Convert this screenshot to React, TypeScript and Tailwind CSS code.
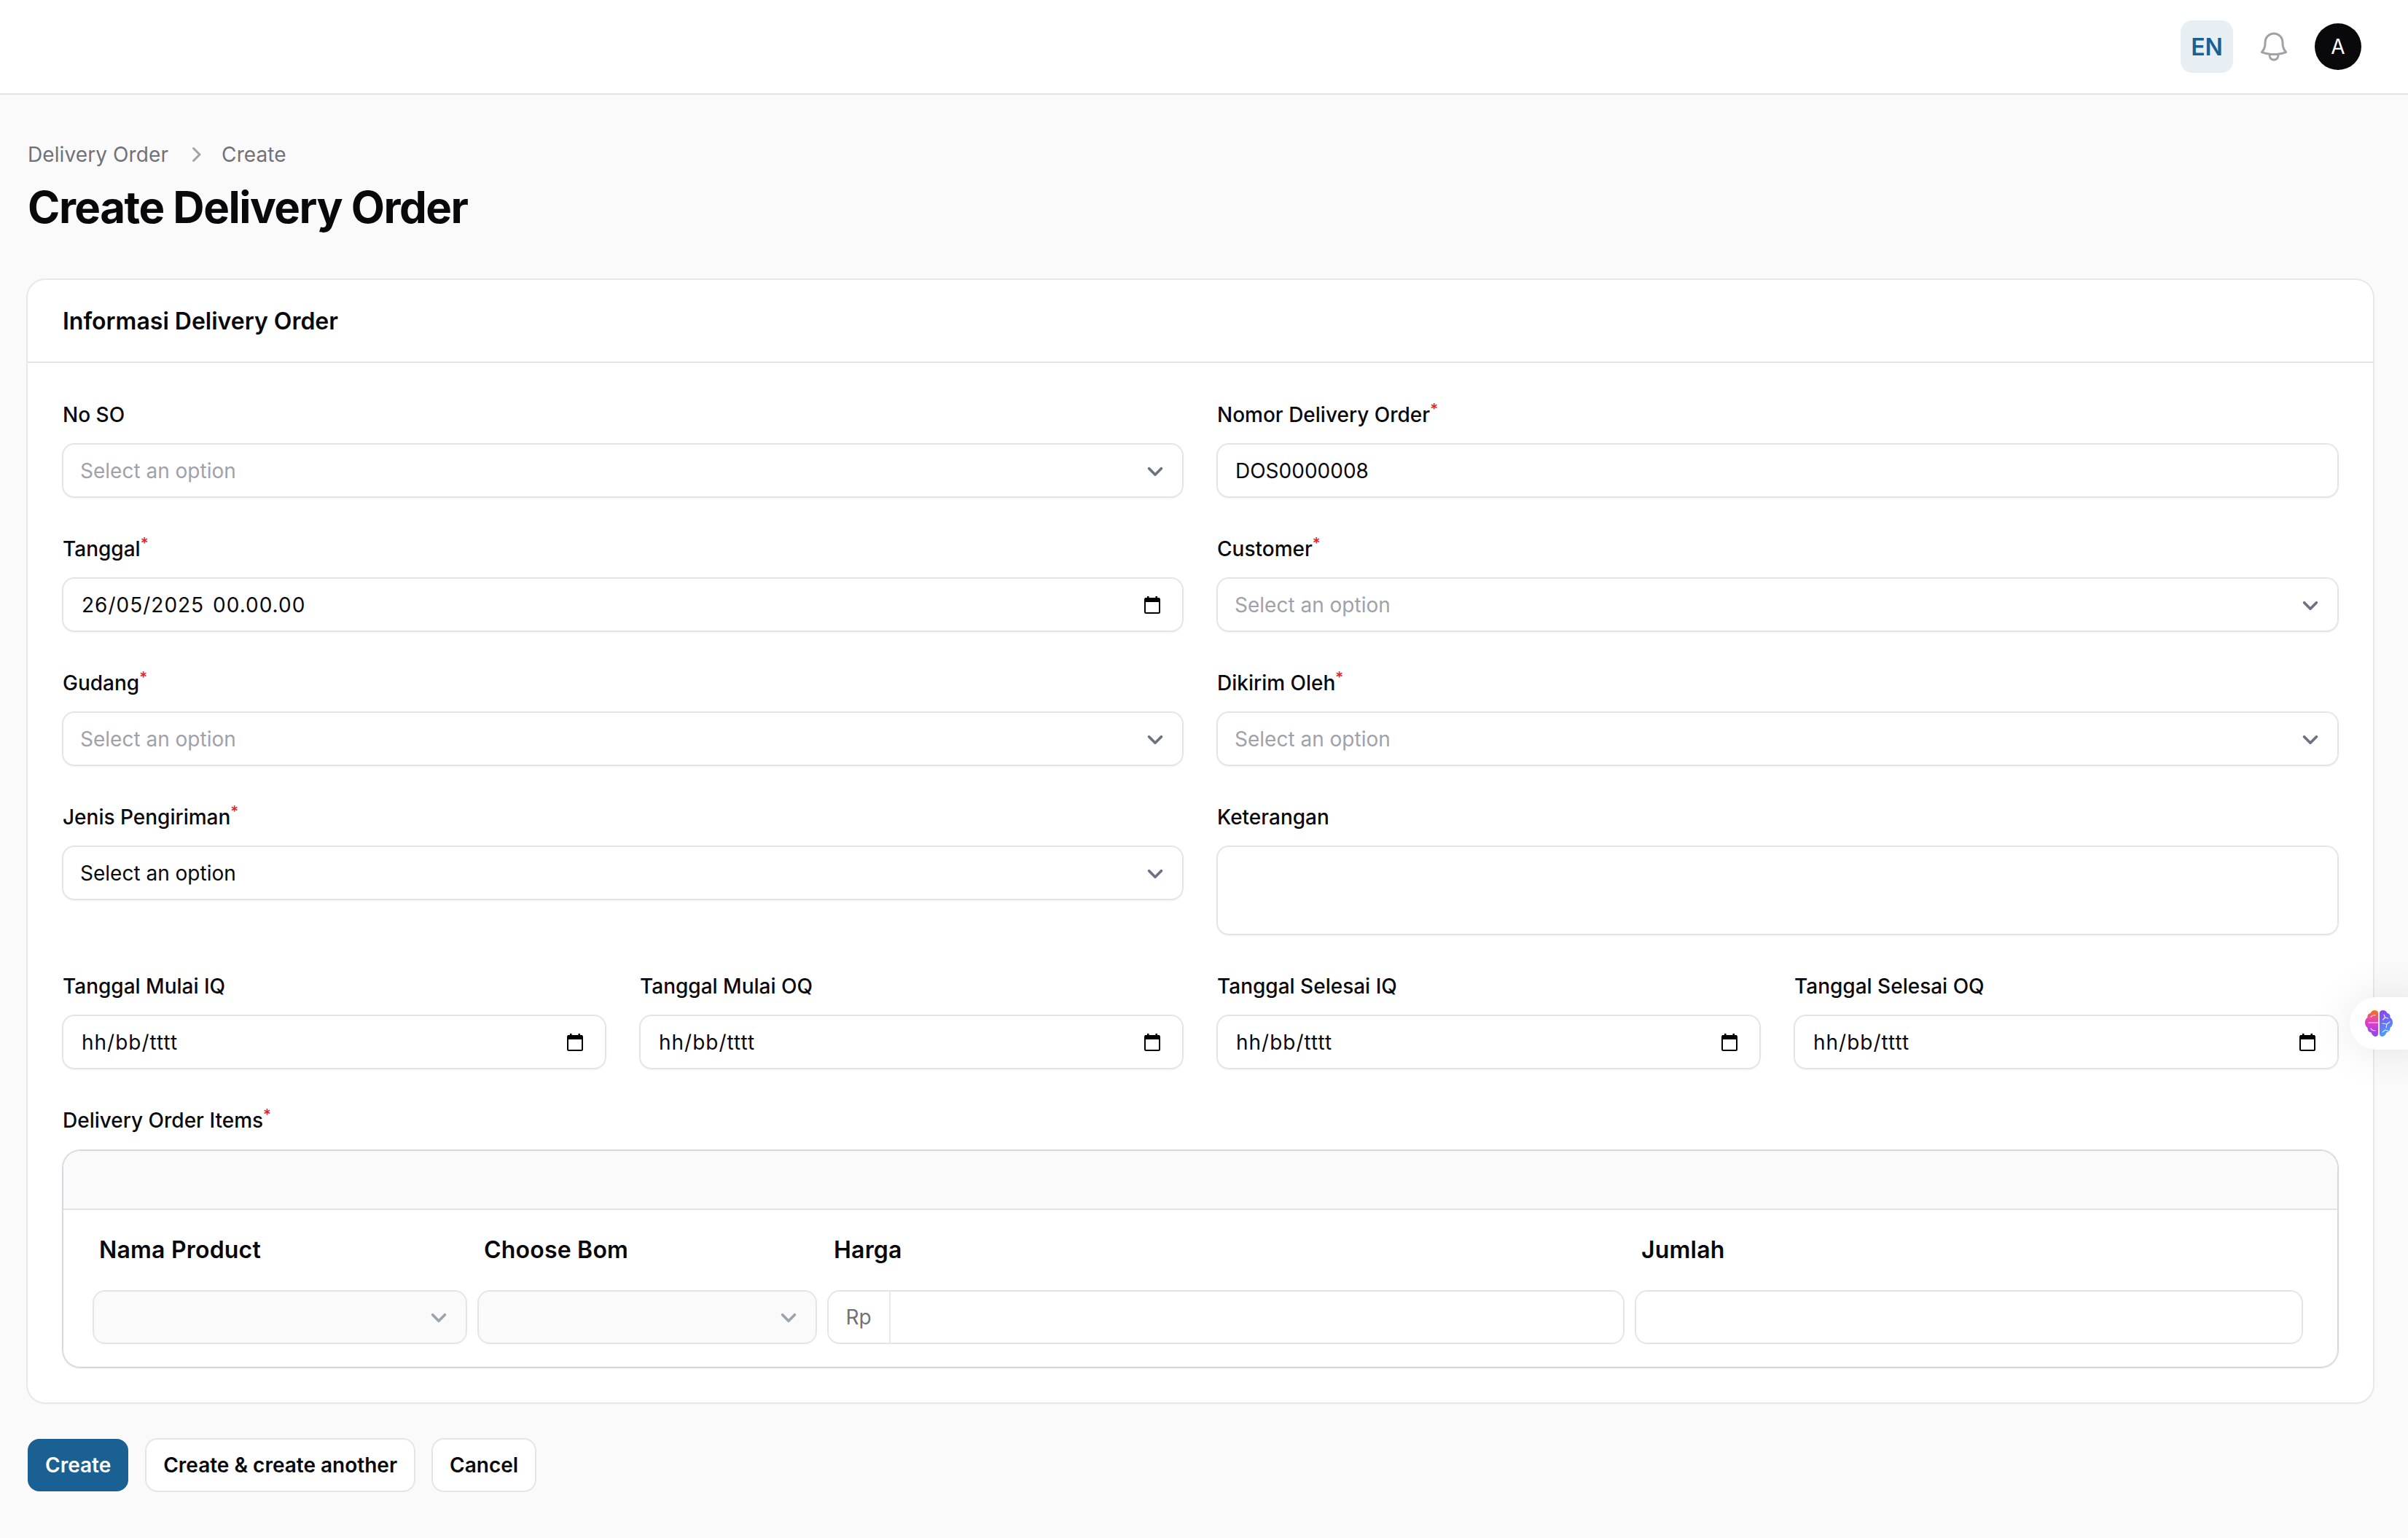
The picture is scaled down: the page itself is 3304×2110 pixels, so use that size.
import type { ReactNode } from "react";

function Label({ text, required }: { text: string; required?: boolean }) {
  return (
    <label className="block h-[48px] text-[28px] leading-[48px] font-medium text-[#09090b]">
      {text}
      {required && <sup className="text-[#dc2626] font-medium">*</sup>}
    </label>
  );
}

function Chevron({ light }: { light?: boolean }) {
  return (
    <svg viewBox="0 0 20 20" fill="none" className="w-[42px] h-[42px] shrink-0 mt-[2px]">
      <path d="M6 8l4 4 4-4" stroke={light ? "#9ca3af" : "#6b7280"} strokeWidth="1.75" strokeLinecap="round" strokeLinejoin="round" />
    </svg>
  );
}

function Calendar() {
  return (
    <svg viewBox="0 0 22 24" className="w-[22px] h-[24px] shrink-0">
      <rect x="1" y="3" width="20" height="20" rx="1.5" fill="none" stroke="#000" strokeWidth="2" />
      <rect x="1" y="2" width="20" height="6" fill="#000" />
      <rect x="4" y="0" width="2.5" height="3" fill="#000" />
      <rect x="15.5" y="0" width="2.5" height="3" fill="#000" />
    </svg>
  );
}

function Box({ children, className = "" }: { children?: ReactNode; className?: string }) {
  return <div className={`h-[73px] mt-4 flex items-center rounded-2xl bg-white ring-1 ring-[#e4e4e7] inset-ring-1 inset-ring-[#e4e4e7] shadow-sm text-[28px] ${className}`}>{children}</div>;
}

function SelectField({ label, required, value }: { label: string; required?: boolean; value?: string }) {
  return (
    <div>
      <Label text={label} required={required} />
      <Box className="pl-6 pr-[17px] justify-between">
        <span className={value ? "text-[#09090b]" : "text-[#a1a1aa]"}>{value ?? "Select an option"}</span>
        <Chevron />
      </Box>
    </div>
  );
}

function DateField({ label, required, value }: { label: string; required?: boolean; value: string }) {
  return (
    <div>
      <Label text={label} required={required} />
      <Box className="pl-[26px] pr-[31px] justify-between">
        <span className="text-[#09090b] tracking-[1px] [word-spacing:3px]">{value}</span>
        <Calendar />
      </Box>
    </div>
  );
}

function ColHead({ text }: { text: string }) {
  return <div className="pl-2 text-[32px] leading-[48px] font-semibold tracking-[0.2px] text-[#09090b]">{text}</div>;
}

export default function App() {
  return (
    <div className="min-h-screen bg-[#fafafa] font-['Inter',sans-serif] relative overflow-hidden">
      <header className="h-[130px] border-b-2 border-[#e4e4e7] bg-white flex items-center justify-end gap-8 pr-16">
        <div className="w-[72px] h-[72px] pt-[2px] rounded-2xl bg-[#e8eff4] flex items-center justify-center text-[32px] font-semibold text-[#1a6093]">EN</div>
        <svg viewBox="0 0 24 24" fill="none" stroke="#a1a1aa" strokeWidth="1.5" strokeLinecap="round" strokeLinejoin="round" className="w-12 h-12">
          <path d="M14.857 17.082a23.848 23.848 0 0 0 5.454-1.31A8.967 8.967 0 0 1 18 9.75V9A6 6 0 0 0 6 9v.75a8.967 8.967 0 0 1-2.312 6.022c1.733.64 3.56 1.085 5.455 1.31m5.714 0a24.255 24.255 0 0 1-5.714 0m5.714 0a3 3 0 1 1-5.714 0" />
        </svg>
        <div className="w-16 h-16 rounded-full bg-[#09090b] flex items-center justify-center text-[28px] text-white">A</div>
      </header>

      <main className="pl-[38px] pr-[48px] pt-[62px]">
        <nav className="flex items-center h-[40px] text-[28px] text-[#71717a] tracking-[0.1px]">
          <span>Delivery Order</span>
          <svg viewBox="0 0 20 20" fill="#a1a1aa" className="w-10 h-10 ml-[17px] mr-[16px]">
            <path fillRule="evenodd" clipRule="evenodd" d="M8.22 5.22a.75.75 0 0 1 1.06 0l4.25 4.25a.75.75 0 0 1 0 1.06l-4.25 4.25a.75.75 0 0 1-1.06-1.06L11.94 10 8.22 6.28a.75.75 0 0 1 0-1.06Z" />
          </svg>
          <span>Create</span>
        </nav>
        <h1 className="mt-4 text-[60px] leading-[72px] font-bold tracking-[-1.5px] text-[#09090b]">Create Delivery Order</h1>

        <section className="mt-16 rounded-3xl bg-white ring-2 ring-[#e8e8ea] shadow-sm">
          <div className="h-[114px] pt-[2px] border-b-2 border-[#e4e4e7] px-12 flex items-center text-[32px] font-semibold text-[#09090b]">Informasi Delivery Order</div>
          <div className="px-12 pt-[47px] pb-12">
            <div className="grid grid-cols-[1537px_1538px] gap-x-[47px] gap-y-[47px]">
              <SelectField label="No SO" />
              <div>
                <Label text="Nomor Delivery Order" required />
                <Box className="px-[25px] text-[#09090b]">DOS0000008</Box>
              </div>
              <DateField label="Tanggal" required value="26/05/2025 00.00.00" />
              <SelectField label="Customer" required />
              <SelectField label="Gudang" required />
              <SelectField label="Dikirim Oleh" required />
              <SelectField label="Jenis Pengiriman" required value="Select an option" />
              <div>
                <Label text="Keterangan" />
                <Box className="h-[121px]" />
              </div>
            </div>

            <div className="grid grid-cols-[745px_745px_745px_746px] gap-x-[47px] mt-[47px]">
              <DateField label="Tanggal Mulai IQ" value="hh/bb/tttt" />
              <DateField label="Tanggal Mulai OQ" value="hh/bb/tttt" />
              <DateField label="Tanggal Selesai IQ" value="hh/bb/tttt" />
              <DateField label="Tanggal Selesai OQ" value="hh/bb/tttt" />
            </div>

            <div className="mt-[47px]">
              <Label text="Delivery Order Items" required />
              <div className="mt-[17px] rounded-3xl bg-white ring-1 ring-[#d8d8dc] inset-ring-1 inset-ring-[#d8d8dc] shadow-sm overflow-hidden">
                <div className="h-[81px] mx-[1px] mt-[1px] rounded-t-3xl bg-[#fafafa] border-b-2 border-[#e4e4e7]" />
                <div className="pl-[42px] pr-[49px] pt-[31px] pb-[33px]">
                  <div className="grid grid-cols-[512px_464px_1092px_915px] gap-x-4">
                    <ColHead text="Nama Product" />
                    <ColHead text="Choose Bom" />
                    <ColHead text="Harga" />
                    <ColHead text="Jumlah" />
                  </div>
                  <div className="grid grid-cols-[512px_464px_1092px_915px] gap-x-4 mt-[32px]">
                    <div className="h-[72px] flex items-center justify-end pr-[17px] rounded-2xl bg-[#fafafa] ring-1 ring-[#e4e4e7] inset-ring-1 inset-ring-[#e4e4e7]"><Chevron light /></div>
                    <div className="h-[72px] flex items-center justify-end pr-[17px] rounded-2xl bg-[#fafafa] ring-1 ring-[#e4e4e7] inset-ring-1 inset-ring-[#e4e4e7]"><Chevron light /></div>
                    <div className="h-[72px] flex items-center rounded-2xl bg-white ring-1 ring-[#e4e4e7] inset-ring-1 inset-ring-[#e4e4e7]">
                      <div className="h-full w-[86px] border-r-2 border-[#e8e8ea] flex items-center justify-center text-[28px] text-[#71717a]">Rp</div>
                    </div>
                    <div className="h-[72px] rounded-2xl bg-white ring-1 ring-[#e4e4e7] inset-ring-1 inset-ring-[#e4e4e7]" />
                  </div>
                </div>
              </div>
            </div>
          </div>
        </section>

        <div className="mt-[50px] flex gap-[24px] text-[28px] font-semibold">
          <button className="h-[72px] px-6 rounded-2xl bg-[#1a6093] text-white">Create</button>
          <button className="h-[72px] px-6 rounded-2xl bg-white ring-1 ring-[#e4e4e7] inset-ring-1 inset-ring-[#e4e4e7] text-[#09090b]">Create &amp; create another</button>
          <button className="h-[72px] px-6 rounded-2xl bg-white ring-1 ring-[#e4e4e7] inset-ring-1 inset-ring-[#e4e4e7] text-[#09090b]">Cancel</button>
        </div>
      </main>

      <div className="absolute left-[3224px] top-[1368px] w-[100px] h-[72px] rounded-l-[36px] bg-white shadow-[0_0_60px_rgba(0,0,0,0.1)] flex items-center pl-[21px]">
        <svg viewBox="0 0 38 36" className="w-[38px] h-[36px]">
          <defs>
            <linearGradient id="brainL" gradientUnits="userSpaceOnUse" x1="15" y1="0" x2="12" y2="36">
              <stop offset="0" stopColor="#f97316" />
              <stop offset="0.45" stopColor="#e63cc4" />
              <stop offset="1" stopColor="#8b45f0" />
            </linearGradient>
            <linearGradient id="brainR" gradientUnits="userSpaceOnUse" x1="22" y1="2" x2="36" y2="34">
              <stop offset="0" stopColor="#8b45f0" />
              <stop offset="1" stopColor="#3fa8ff" />
            </linearGradient>
          </defs>
          <path d="M18 4C18 1.5 16 0 13.5 0 10.5 0 8.5 1.5 7.5 4 4.5 4.5 3 7 3.5 10 1 11.5 0 14 0 17s1.5 5.5 3.5 7c0 3.5 2 6 5 6.500 1 3 3.500 5.500 6 5.500 2 0 3.500-1.500 3.500-4z" fill="url(#brainL)" />
          <path d="M20 4c0-2.500 2-4 4.500-4 3 0 5 1.500 6 4 3 .5 4.500 3 4 6 2.500 1.500 3.500 4 3.500 7s-1.500 5.500-3.500 7c0 3.500-2 6-5 6.500-1 3-3.500 5.500-6 5.500-2 0-3.500-1.500-3.500-4z" fill="url(#brainR)" />
          <g fill="none" stroke="#ffffff" strokeOpacity="0.85" strokeWidth="1.2" strokeLinecap="round" strokeLinejoin="round">
            <path d="M18 17H5" />
            <path d="M8 9c2-2 4-2.500 6-2.500" />
            <path d="M8 25c1 2 3 3 6 3" />
            <path d="M26 6l1.500 4-3 3M27.500 10l4 1" />
            <path d="M24 18l6 1 4-3M30 19l-1 5" />
            <path d="M24 30l4-3 4 1.500" />
          </g>
        </svg>
      </div>
    </div>
  );
}
